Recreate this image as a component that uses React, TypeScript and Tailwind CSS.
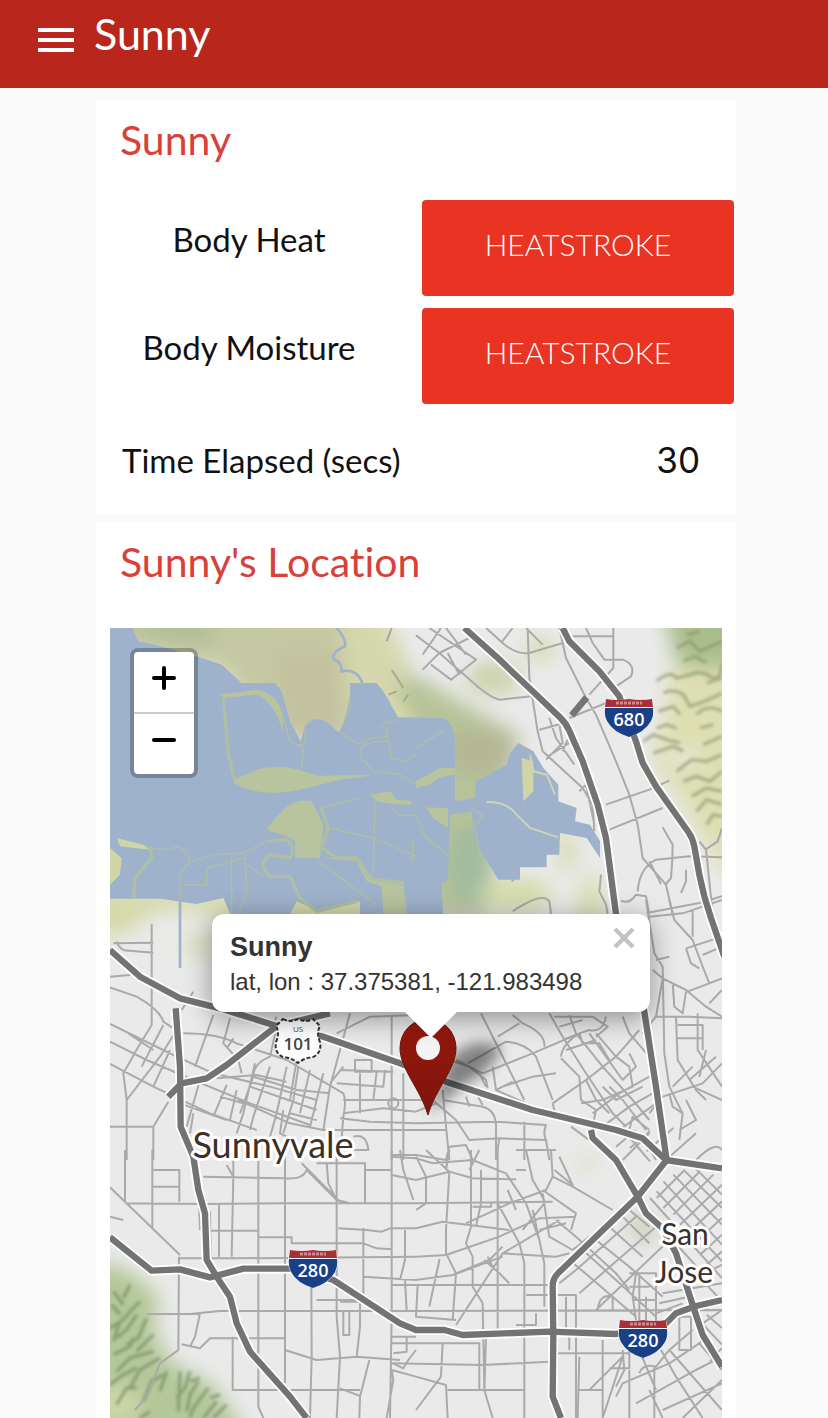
import { X } from 'lucide-react';

const highways = [
  'M1063 0L1158 85L1268 190L1350 268Q1368 285 1378 308L1418 400L1463 530L1488 630L1518 858L1603 1151L1638 1376L1670 1596L1583 1706L1458 1826L1345 1935Q1328 1951 1328 1975L1330 2126L1328 2306L1353 2370',
  'M1358 0L1378 40L1468 130L1528 205L1578 340L1598 405L1638 475L1735 612Q1748 630 1753 655L1768 740L1783 805L1803 870L1843 986',
  'M0 966L90 1046L210 1111L330 1141L500 1194L640 1226L870 1306L1008 1361L1268 1446L1518 1506L1598 1531L1668 1596L1836 1621',
  'M175 1406L215 1366L290 1351L350 1311L500 1194L660 1156',
  'M197 1141L210 1316L212 1496L250 1586L265 1686L285 1756L290 1896L320 1946L360 2006L380 2086L420 2171L540 2306L590 2370',
  'M0 1828L125 1928L210 1924L300 1948L400 1922L560 1922L670 1956L870 2086L918 2106L1003 2106L1058 2121L1318 2111L1518 2118L1658 2096L1698 2056L1758 2034L1836 2016',
  'M1443 1506L1448 1530L1518 1596L1583 1706L1608 1756L1658 1801L1698 1876L1748 2031L1778 2121L1836 2216',
];

// street tiles share one drawing scale, each is placed by its own origin
const streets = [
  {
    at: 'translate(918 0)',
    d: 'M0 22L70 75L150 145Q220 210 250 215L345 205M20 125L70 75L160 30M40 0L180 95L105 155L45 110M90 0L150 80M95 75L130 140M20 80L75 0M210 0L260 45Q300 80 340 75L440 45M255 45L290 0M335 0L340 150L365 310L380 370L500 480L530 530L535 610M330 0L380 50M430 0L450 90L510 210L540 260L600 400L640 500L665 590L680 690L750 770L770 858M510 0L530 45L565 95L620 95Q660 110 645 145L600 175M592 0V120L520 200M460 270L570 225M470 25H590M370 305L445 285M400 270L420 330L475 410M430 290L440 345L390 395M395 385L460 345M455 335L440 370M570 530L700 485L760 458M580 605L740 540M740 598L770 650Q770 700 765 750L750 768M665 790Q670 720 720 695L820 685L918 688M810 725L810 760L795 795M615 818Q640 830 660 800L690 805L700 858M692 855L850 825L918 805M850 640L870 665L880 760L890 858M868 665L905 640L918 600M555 740L550 790L570 830L575 858M700 700L735 768M290 850Q380 790 400 820L405 858M490 490L510 470L535 590',
  },
  {
    at: 'translate(0 816)',
    d: 'M125 72V375L85 440L40 520L50 600V780M10 130L130 128M20 125Q30 155 60 152L130 158M0 230L60 225M0 262L80 290Q150 330 160 365L190 385M250 275L215 330M0 372L190 465L310 520L480 560L620 600M0 425L110 480L250 540L420 610L600 675M0 492L130 560L300 640L440 690M55 400L130 450M95 500L160 375M50 600L150 470L200 390M130 560L180 450M220 400Q320 400 380 430L530 480L700 580Q710 600 700 650L690 780M310 345L255 500M360 355L340 430L385 480L395 520M500 380L480 470Q430 490 430 530L390 640M435 490L400 640L380 700M480 500L430 650L420 690M530 500L500 640L480 710M565 500L550 600L520 700M600 510L570 640M640 520L600 680M690 450L660 560L640 690M720 340L690 450M430 530L560 570L660 580M420 560L620 630M385 600L540 670L640 690M320 535L440 525L530 545M330 590L400 610M350 555L310 650M380 570L360 660M250 640L240 700M270 540L230 680M130 780V680H0M130 680L175 605M210 610L350 660M370 415L350 445M690 510L850 515M735 480H785V515H735ZM660 550L700 500M680 550L820 560L825 510M750 520V640M700 600H918M690 655L780 665L918 670M700 640L820 625L918 635M845 350V780M880 520V780M640 690L918 690M540 640L620 660M520 630L510 700L550 720M730 710Q770 700 775 750H690M850 610m-15 0a15 15 0 1 0 30 0a15 15 0 1 0 -30 0M680 400L780 350L918 345M500 350L490 370M560 480L540 600M800 515L790 600',
  },
  {
    at: 'translate(918 816)',
    d: 'M195 340L250 450L325 600M245 410L310 370M290 345L320 370Q390 400 385 440M100 480L160 500L210 540L215 565M155 490L270 425Q330 430 360 470L410 600M120 480L200 520L350 460L490 400M260 560L350 530L420 520M410 610L510 540L600 470L670 390M240 570L290 545M230 500L240 570L330 610M400 340L440 410L510 520L590 640L630 680M460 345L480 400L560 500L650 600L700 660M435 470Q440 430 490 400L520 390Q560 400 570 350M435 475L490 530L495 600L540 630L530 680M415 350L530 350L575 380L540 410M440 420L490 400L500 430L550 430L580 480M540 400L600 470L640 500L650 560L560 600L495 610M620 350L640 400L700 470M640 460L660 500L620 540M560 560L600 600L680 560M530 640L610 580L700 530M560 680L640 620L710 580M610 690L720 610M640 690L650 650L700 690M580 560L620 600L690 690M510 540L540 600L580 640M450 450L540 420M430 380L500 360M520 400L620 540M700 50L800 40L918 0M690 0L715 160L740 200L745 460L760 560L800 640L790 720M710 210L740 235L810 270L870 320L918 350M760 0L775 60L830 120L860 200L880 250M830 30L830 110M810 145L918 110M810 145L825 190L850 205M740 235L720 350L680 400M815 275L918 235M715 350H820L918 355M770 250L775 320L800 340L810 275M780 350L785 480L840 570L870 600M785 375H860V450M785 415H860M845 340V450L918 560M740 590L860 550L918 490M760 580L770 620L800 640M820 540L900 470M830 560L918 600M870 450L850 530M770 560L830 500M750 780L840 700M840 780Q900 720 918 750M790 690L840 660L810 600M720 180L760 170M860 165L918 140M880 310L918 270M700 640L740 590M0 600L50 600L120 660L160 720L250 715L390 720L400 780M80 570L90 680L100 780M0 670L240 665L390 675Q380 700 390 720M80 600L200 620Q240 630 240 680V780M150 590L160 620M180 580L200 615M410 610L420 650M-75 765H0L90 780L100 740L150 735L170 780M0 690L90 690M300 750H420M325 665V780M250 715L240 780M465 680L600 780M600 740L660 690M620 780L700 700M690 730L720 780M210 560L190 520M0 635L60 610',
  },
  {
    at: 'translate(0 1566)',
    d: 'M0 112L210 315M45 0V155M127 0V235M130 60H208V155M130 110H208M50 160L285 162L530 160H918M207 320L205 600L150 640L110 740L75 780M210 325H370L918 320M300 185L302 320M327 162V320M300 242H445M265 90L270 240M280 80L520 85Q580 90 590 60L680 150L720 160M350 45L370 80L365 320M370 0V80M445 0V770L460 804M525 0V700M575 40L690 155M650 40L655 100L680 150M680 0V500L690 620L680 804M765 40V160M620 40H765V60H845M845 0V500L840 804M870 0L880 60L910 150M445 262H545V280H760L800 295L845 298M685 235L770 240L815 245L840 235L918 235M760 235V440M760 380L918 390M110 492L240 492L330 483H918M270 490L255 560L240 590M215 583L270 595L300 565H525M368 560V720H750M604 410L605 620L600 804M525 600L620 630L740 620L870 630M690 455H750V530L740 620M700 480V555H718V480M620 450H750M778 630L750 740L748 804M830 804L850 690L845 660L918 680M845 560H918M850 610L890 605L890 560M850 640L880 655L895 630L918 600M690 715L750 738M885 240V330L870 390M845 75L918 90M885 390L890 480M0 200L40 210',
  },
  {
    at: 'translate(918 1566)',
    d: 'M-75 20L0 25L50 40L170 30L270 70L330 160L370 270L385 340V470M0 90L100 65L170 85L300 88M0 160L410 155M0 235L80 215L160 225L280 240M30 0L100 65L90 240V310L120 370L110 510M0 20L30 80L30 160L0 180M100 0L90 60M165 0V230L150 280L170 320V410L200 460L205 720M190 0L160 60M245 0V540M195 60V160L180 230M170 170H225V160M405 0L410 80L390 120L280 160L150 220M0 320L90 315L250 260L370 205L480 200M0 390L70 380L110 375L260 320M-75 405H400M60 380L70 330L40 470M90 310L120 370L220 330L260 290M205 330L250 370L280 400M230 350L215 320M120 525L260 310L430 210M260 310L420 320L460 310M245 160L310 280L325 340V804M320 240L385 160M350 180L370 270M380 120L480 190L465 240M410 80L470 110L590 180M415 60L470 105L430 20M0 483L918 480M5 405L0 500L120 510M380 130L400 260L470 300L520 260M420 210L480 260L600 370L640 420M370 240L450 220M330 435H480V804M450 440V540M325 440V480M300 525H360V490M330 0L350 90L385 150M300 60H330M275 120L300 180M430 400L480 360L660 200M490 430L720 230M540 480L760 270M460 330L520 380L660 500M500 300L600 390L720 500M540 270L640 350L740 440M580 230L680 320M620 200L700 280M640 180L700 230M545 480Q550 430 590 440V480M640 370H720V530M640 410H700M650 450H720M670 380V510M690 440V510M660 370L650 440L660 510M-75 580H190V720M-75 640L200 645L400 635M80 580L75 680L0 780M0 680L90 705L95 804M95 720H325M210 560L205 720L230 804M420 610H640M460 560V600M490 620L485 804M490 720H560M520 720L620 620L560 804M620 600L625 660L600 710M560 570V804M580 655H640V560M640 660V804M670 670Q680 640 720 650L760 600L830 540M600 740L620 700L760 640L880 560M660 760L840 660L918 620M700 720L740 804M715 650V804M735 600L780 680L860 804M670 600L720 720M790 500H825V600H790ZM760 600L918 780M850 580L918 660M800 804L918 690M740 780L918 700M860 520L918 480M740 430L918 400M730 460L820 440M720 490L800 460',
  },
];

const downtown =
  'M1690 1640L1836 1790M1720 1625L1836 1740M1760 1625L1836 1700M1660 1660L1836 1850M1640 1690L1836 1900M1620 1710L1836 1950M1610 1750L1800 1960M1640 1710L1720 1630M1660 1740L1770 1630M1690 1760L1810 1640M1710 1790L1836 1670M1740 1810L1836 1720M1760 1840L1836 1770M1770 1880L1836 1820M1790 1910L1836 1870M1740 1960L1836 1910M1610 1570L1690 1500M1560 1560L1620 1510M1620 1600L1560 1530M1770 2080L1836 2150M1790 2060L1836 2100M1800 2200L1836 2160M1780 1960L1836 2020';

const ridges =
  'M1640 160Q1680 125 1700 150L1740 140Q1770 125 1800 145T1836 110M1660 195Q1690 180 1720 200L1740 235Q1790 220 1836 195M1700 60L1740 40L1770 70L1836 40M1720 100L1755 85L1790 105M1760 260Q1790 225 1836 250M1600 340L1630 320L1670 335L1710 345M1630 375L1690 355L1720 370M1700 430L1745 395L1790 400L1836 380M1720 460L1760 445L1800 460L1836 430M1745 505L1790 480L1836 490M1760 550L1790 515L1836 530M1790 590L1810 560L1836 565M1780 350L1836 325M1645 250L1690 235L1710 260M1790 165L1836 150M1730 20L1770 10M1640 300L1670 290L1700 300M1770 300L1810 290';

const foothills =
  'M10 1990L40 2030M5 2030L30 2060M60 1970L40 2010M0 2100Q40 2080 60 2050M20 2130L50 2105L80 2060M50 2150L85 2130L110 2070M10 2180L60 2155L70 2130M80 2170L130 2120M20 2230L60 2190L130 2170M0 2270L40 2240L80 2220M60 2280L90 2225L150 2190M100 2320L125 2260L160 2240M20 2330L50 2280L80 2280M170 2230L150 2290M210 2230L205 2350M240 2230L225 2280L200 2310M265 2260L240 2300L230 2350M295 2280L250 2340L240 2370M320 2320L280 2370M350 2330L310 2370M120 2350L90 2370M30 2080L10 2140M90 2020L60 2050M270 2250L240 2260M330 2300L300 2310';

const Interstate = ({ x, y, number }: { x: number; y: number; number: string }) => (
  <g transform={`translate(${x} ${y})`}>
    <path d="M1 0Q12 2 24 0Q36 2 47 0Q51 12 47 21Q41 33 24 38Q7 33 1 21Q-3 12 1 0Z" fill="#fff" />
    <path d="M1 0Q12 2 24 0Q36 2 47 0L48 8H0Z" fill="#a92f36" />
    <path d="M0 9H48Q49 16 46 22Q40 33 24 38Q8 33 2 22Q-1 16 0 9Z" fill="#193f86" />
    <path d="M11 4H37" stroke="#cf8a8d" strokeWidth="3" strokeDasharray="3 1" />
    <text x="24" y="27" textAnchor="middle" fill="#fff" fontSize="18" fontWeight="600" fontFamily="'Open Sans', sans-serif">
      {number}
    </text>
  </g>
);

const MapCanvas = () => (
  <svg
    className="absolute inset-0 h-full w-full"
    viewBox="0 0 612 790"
    preserveAspectRatio="xMidYMid slice"
    role="img"
    aria-label="Map of Sunnyvale and San Jose"
  >
    <defs>
      <filter id="soft" x="-50%" y="-50%" width="200%" height="200%">
        <feGaussianBlur stdDeviation="28" />
      </filter>
      <filter id="relief">
        <feGaussianBlur stdDeviation="4" />
      </filter>
      <filter id="shade" x="-50%" y="-50%" width="200%" height="200%">
        <feGaussianBlur stdDeviation="7" />
      </filter>
      <linearGradient id="pin" x1="0" y1="0" x2="0" y2="1">
        <stop offset="0" stopColor="#97190e" />
        <stop offset="1" stopColor="#7c140c" />
      </linearGradient>
    </defs>
    <rect width="612" height="790" fill="#eaeaea" />
    <g transform="scale(0.33333)">
      <g filter="url(#soft)">
        <path d="M0 -60H720V330H500L330 120L0 60Z" fill="#c5c9a3" />
        <path d="M60 -60H330L300 60L80 30Z" fill="#b3bf96" />
        <path d="M480 60H700V340H520Z" fill="#c3c2a0" />
        <path d="M690 -60H810L890 90L900 290H720Z" fill="#d5d8ac" />
        <path d="M850 130L930 150L1100 250L1230 320L1190 480L1130 860H940L900 280Z" fill="#b6c398" />
        <ellipse cx="1110" cy="370" rx="110" ry="70" fill="#b5b795" />
        <ellipse cx="1080" cy="710" rx="70" ry="120" fill="#a3bb9e" />
        <ellipse cx="1150" cy="150" rx="80" ry="50" fill="#ccd3ac" />
        <ellipse cx="1290" cy="65" rx="45" ry="30" fill="#d3d8a4" />
        <ellipse cx="1220" cy="800" rx="110" ry="50" fill="#d4dba9" />
        <ellipse cx="1370" cy="670" rx="28" ry="60" fill="#d6daaf" />
        <ellipse cx="1440" cy="820" rx="40" ry="80" fill="#d9dfb4" />
        <path d="M-60 780H330L300 850L140 850L40 920L-60 930Z" fill="#d5daaa" />
        <path d="M230 780H700V900H330Z" fill="#dadfb5" />
        <ellipse cx="270" cy="950" rx="60" ry="35" fill="#dfe2c4" />
        <path d="M1680 110L1900 60V800L1790 660L1700 500L1620 400L1660 280Z" fill="#dddfb2" />
        <ellipse cx="1720" cy="390" rx="50" ry="25" fill="#e8e8dc" />
        <path d="M1660 -60H1900V130L1700 110Z" fill="#a9be8b" />
        <path d="M-60 1890L60 1930L150 2010L130 2100L180 2200L310 2270L420 2430H-60Z" fill="#b3c798" />
        <ellipse cx="20" cy="2330" rx="70" ry="60" fill="#cdd7a8" />
        <ellipse cx="1600" cy="1800" rx="45" ry="50" fill="#cdd4c0" />
        <ellipse cx="1430" cy="1605" rx="28" ry="22" fill="#d8dfbb" />
      </g>
      <g fill="none" strokeWidth="10" opacity="0.6" filter="url(#relief)">
        <path d={ridges} stroke="#88916a" />
        <path d={foothills} stroke="#6f8360" />
      </g>

      <path
        d="M0 0H66L85 40C190 60 220 80 260 85L335 110L395 165L495 165L515 190L540 280L572 340L583 300C600 268 630 268 655 285L685 312C702 285 712 250 720 200V165L800 165Q830 200 845 235L865 268L1000 270Q1033 285 1035 345V520H1095L1098 460L1190 410L1200 375L1225 345L1270 370L1300 420L1345 470V520L1400 540L1395 580L1440 590L1470 640V690L1430 630L1350 615L1348 680L1310 680V718H1230V755H1165L1095 640L1085 550L1020 560L1014 755L995 765L1000 900H380L340 810L260 828L150 812L0 812Z"
        fill="#9fb2cb"
      />
      <path
        d="M680 0Q710 35 705 55Q660 75 672 95Q695 100 695 130Q740 120 757 165M210 730V1020M1100 600L1160 680L1210 760"
        fill="none"
        stroke="#9fb2cb"
        strokeWidth="8"
      />
      <g fill="#b7c49d">
        <path d="M372 455L440 425Q510 405 580 430L625 443L800 440L690 455L570 485Q450 510 372 465Z" />
        <path d="M470 600L520 545Q560 510 605 520L640 590L630 690H555V640Q530 620 480 610Z" />
        <path d="M330 200L440 185Q500 195 515 250L520 310Q480 200 430 200L340 210Z" />
        <path d="M780 500L840 490L860 515L918 520L900 530L850 528L800 520Z" />
        <path d="M640 690L740 685L790 750L880 760L890 858H820L815 775L770 760L740 700Z" />
        <path d="M918 460L990 420H1035V440Q990 440 960 470L918 480Z" />
        <path d="M940 530L1014 540V600L970 570Z" />
      </g>
      <path d="M540 858L560 820L630 850L750 820V900H540ZM0 660L35 690L30 740L0 770ZM20 630L100 650L120 665L30 655ZM1235 390L1270 400V490L1240 520Z" fill="#d0d5a8" />
      <g fill="none" stroke="#aebfa4" strokeLinejoin="round">
        <path
          d="M340 205L355 380L375 460M120 655L125 690L75 750L70 812M470 640L530 635Q560 660 540 690L480 680Q440 710 480 745L540 745L570 810L620 850L740 820M632 540L655 600L635 660L680 690L740 690L780 750L880 770"
          strokeWidth="10"
        />
        <path
          d="M120 660L175 665Q220 640 240 700L208 740L212 812M400 675L470 640M515 250L540 340L580 360L575 420M585 300V350L555 350M690 310L745 350Q760 330 830 325M830 300V340Q730 340 755 390L800 440M810 300Q820 280 860 280M835 340L845 390L880 400L918 380M632 540L750 510M660 600L790 630L918 685M795 510L790 740M845 540Q860 570 918 560M240 700L320 680L400 675M365 680V858M405 675L410 790L385 858M290 770L290 720L405 690M215 770H290M410 710L460 745M620 695L800 830M720 200V240L690 310M918 360L1005 305M918 560L940 620L1010 680M1080 540L1120 560L1095 600L1110 680M908 630V700M800 430L870 440L918 470"
          strokeWidth="4"
        />
      </g>
      <path d="M905 525Q980 540 1080 520Q1160 505 1200 520" fill="none" stroke="#9fb2cb" strokeWidth="16" />
      <path d="M1130 522Q1190 520 1220 560L1260 600L1345 628M1260 380L1270 430L1310 440L1335 500" fill="none" stroke="#cfd4b2" strokeWidth="6" />

      <g fill="none" stroke="#aaa" strokeWidth="6" strokeLinejoin="round">
        {streets.map((tile) => (
          <path key={tile.at} transform={tile.at} d={tile.d} />
        ))}
        <path d={downtown} />
        <path d="M830 40L845 0M845 125L880 180M835 200L860 190M880 220L895 200" stroke="#aaa990" />
      </g>
      <path d="M1385 262L1430 208" stroke="#747474" strokeWidth="20" />
      {highways.map((d) => (
        <path key={d} d={d} fill="none" stroke="#fff" strokeWidth="30" strokeLinejoin="round" />
      ))}
      {highways.map((d) => (
        <path key={d} d={d} fill="none" stroke="#737373" strokeWidth="19" strokeLinejoin="round" />
      ))}
    </g>

    <Interstate x={495} y={71} number="680" />
    <Interstate x={179} y={622} number="280" />
    <Interstate x={509} y={692} number="280" />

    <path
      d="M173 391Q180 395 188 391Q196 395 203 391L210 398Q206 405 210 414Q212 425 203 429Q194 430 188 435Q182 430 173 429Q164 425 166 414Q170 405 166 398Z"
      fill="#fff"
      stroke="#333"
      strokeWidth="2"
      strokeDasharray="4 2"
    />
    <g fill="#444" textAnchor="middle" fontFamily="'Open Sans', sans-serif">
      <text x="188" y="404" fontSize="8">US</text>
      <text x="188" y="422" fontSize="17" fontWeight="600">101</text>
    </g>

    <g
      fill="#3b3128"
      stroke="#fff"
      strokeWidth="6"
      strokeLinejoin="round"
      paintOrder="stroke"
      textAnchor="middle"
      fontFamily="Lato, sans-serif"
    >
      <text x="163" y="530" fontSize="36">Sunnyvale</text>
      <text x="575" y="617" fontSize="30">San</text>
      <text x="574" y="655" fontSize="30">Jose</text>
    </g>

    <path d="M318 486L340 430Q365 405 392 420Q385 440 350 460Z" fill="#000" opacity="0.45" filter="url(#shade)" />
    <path d="M318 487C310 460 290 441 290 420A28 29 0 0 1 346 420C346 441 326 460 318 487Z" fill="url(#pin)" stroke="#6b120b" />
    <circle cx="318" cy="420" r="12" fill="#f4f4f4" />
  </svg>
);

const Popup = () => (
  <div className="absolute left-[102px] top-[286px] rounded-xl bg-white pb-[13px] pl-[18px] pr-[68px] pt-[15px] font-['Liberation_Sans',Arial,sans-serif] font-normal text-[#333] shadow-[0_6px_28px_rgba(0,0,0,0.4)]">
    <p className="text-[27px] font-bold leading-9">Sunny</p>
    <p className="whitespace-nowrap text-2xl leading-[34px]">lat, lon : 37.375381, -121.983498</p>
    <button type="button" aria-label="Close popup" className="absolute right-2 top-1.5 text-[#c3c3c3]">
      <X size={36} strokeWidth={3} strokeLinecap="butt" />
    </button>
    <svg className="absolute left-1/2 top-full -translate-x-1/2" width="52" height="26" viewBox="0 0 52 26" aria-hidden="true">
      <path d="M0 0H52L26 26Z" fill="#fff" />
    </svg>
  </div>
);

const ZoomControl = () => (
  <div className="absolute left-5 top-5 flex flex-col rounded-lg border-4 border-black/25 bg-white bg-clip-padding">
    <button type="button" aria-label="Zoom in" className="flex h-[62px] w-[60px] items-center justify-center border-b-2 border-[#ccc] pb-2">
      <svg width="24" height="24" viewBox="0 0 24 24" stroke="#000" strokeWidth="4" strokeLinecap="round" aria-hidden="true">
        <path d="M2 12H22M12 2V22" />
      </svg>
    </button>
    <button type="button" aria-label="Zoom out" className="flex h-[60px] w-[60px] items-center justify-center pb-2">
      <svg width="24" height="24" viewBox="0 0 24 24" stroke="#000" strokeWidth="4" strokeLinecap="round" aria-hidden="true">
        <path d="M2 12H22" />
      </svg>
    </button>
  </div>
);

const StatusRow = ({ label, status }: { label: string; status: string }) => (
  <div className="grid grid-cols-[1fr_312px] gap-5 pr-0.5">
    <div className="flex items-center justify-center pb-4 text-[33px] text-[#111]">{label}</div>
    <button type="button" className="h-24 rounded bg-[#e93323] pb-2 text-[30px] font-light uppercase text-white">
      {status}
    </button>
  </div>
);

const App = () => {
  return (
    <div className="min-h-screen bg-[#fafafa] font-['Lato',sans-serif] [font-variant-ligatures:none]">
      <header className="flex h-22 items-start bg-[#b9271c] pl-[38px] text-white">
        <button type="button" aria-label="Open menu" className="mt-7">
          <svg width="36" height="24" viewBox="0 0 36 24" fill="currentColor" aria-hidden="true">
            <path d="M0 0H36V4H0ZM0 10H36V14H0ZM0 20H36V24H0Z" />
          </svg>
        </button>
        <h1 className="ml-5 mt-1 text-[43px] leading-[60px]">Sunny</h1>
      </header>

      <main className="pl-24 pr-23 pt-3">
        <section className="bg-white">
          <h2 className="px-6 pt-2.5 text-[41px] leading-[60px] text-[#d9403a]">Sunny</h2>
          <div className="mt-[30px] flex flex-col gap-3">
            <StatusRow label="Body Heat" status="Heatstroke" />
            <StatusRow label="Body Moisture" status="Heatstroke" />
          </div>
          <div className="flex items-center justify-between pb-6 pl-[26px] pr-9 pt-[26px] text-[33px] leading-[60px] text-[#111]">
            <span>Time Elapsed (secs)</span>
            <span className="font-['Inter',sans-serif] text-[35px]">30</span>
          </div>
        </section>

        <section className="mt-2 bg-white">
          <h2 className="px-6 pt-2.5 text-[41px] leading-[60px] text-[#d9403a]">Sunny's Location</h2>
          <div className="px-3.5 pt-9">
            <div className="relative h-[790px] overflow-hidden">
              <MapCanvas />
              <ZoomControl />
              <Popup />
            </div>
          </div>
        </section>
      </main>
    </div>
  );
};

export default App;
